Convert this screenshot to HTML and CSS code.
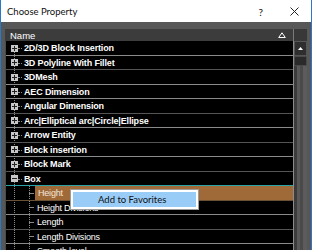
FILE: index.html
```html
<!DOCTYPE html>
<html>
<head>
<meta charset="utf-8">
<link rel="stylesheet" href="styles.css">
</head>
<body>
<div class="window">
  <div class="titlebar">
    <span class="title">Choose Property</span>
    <span class="help">?</span>
    <svg class="close" width="9" height="9" viewBox="0 0 9 9"><path d="M0.5 0.5 L8.5 8.5 M8.5 0.5 L0.5 8.5" stroke="#222" stroke-width="1" fill="none"/></svg>
  </div>
  <div class="frame">
    <div class="header">
      <div class="col-name">
        <span>Name</span>
        <svg class="sort" width="8" height="6" viewBox="0 0 8 6"><path d="M4 0.8 L7.3 5.5 L0.7 5.5 Z" stroke="#fff" stroke-width="1" fill="none"/></svg>
      </div>
      <div class="col-pad"></div>
    </div>
    <div class="body">
      <div class="tree">
        <div class="row r15"><span class="exp plus"></span><span class="label">2D/3D Block Insertion</span></div>
        <div class="row r14 dk"><span class="exp plus"></span><span class="label">3D Polyline With Fillet</span></div>
        <div class="row r15"><span class="exp plus"></span><span class="label">3DMesh</span></div>
        <div class="row r14"><span class="exp plus"></span><span class="label">AEC Dimension</span></div>
        <div class="row r15 dk"><span class="exp plus"></span><span class="label">Angular Dimension</span></div>
        <div class="row r14"><span class="exp plus"></span><span class="label">Arc|Elliptical arc|Circle|Ellipse</span></div>
        <div class="row r15 dk"><span class="exp plus"></span><span class="label">Arrow Entity</span></div>
        <div class="row r14"><span class="exp plus"></span><span class="label">Block insertion</span></div>
        <div class="row r15 dk"><span class="exp plus"></span><span class="label">Block Mark</span></div>
        <div class="row r14 sel-above"><span class="exp minus"></span><span class="label">Box</span></div>
        <div class="row r15 child selected"><span class="dash"></span><span class="label">Height</span></div>
        <div class="row r14 child"><span class="dash"></span><span class="label">Height Divisions</span></div>
        <div class="row r15 child dk"><span class="dash"></span><span class="label">Length</span></div>
        <div class="row r14 child"><span class="dash"></span><span class="label">Length Divisions</span></div>
        <div class="row r15 child"><span class="dash"></span><span class="label">Smooth level</span></div>
      </div>
      <div class="vscroll">
        <div class="btn-up"><svg width="5" height="3" viewBox="0 0 5 3"><path d="M2.5 0 L5 3 L0 3 Z" fill="#fff"/></svg></div>
        <div class="track-top"></div>
        <div class="thumb"></div>
      </div>
    </div>
  </div>
  <div class="menu"><span>Add to Favorites</span></div>
</div>
</body>
</html>
```

FILE: styles.css
```css
* { box-sizing: border-box; }
html, body {
  margin: 0;
  padding: 0;
  width: 312px;
  height: 250px;
  overflow: hidden;
  background: #555;
}
.window {
  position: relative;
  width: 312px;
  height: 250px;
  border-left: 1px solid #2b78c8;
  border-right: 1px solid #2b78c8;
  background: #575757;
  overflow: hidden;
  font-family: "Liberation Sans", Arial, sans-serif;
}
.titlebar {
  height: 22px;
  background: #fff;
  display: flex;
  align-items: center;
  padding: 0 0 0 6px;
  color: #111;
}
.title {
  font-family: "Lato", "Liberation Sans", sans-serif;
  font-size: 9.5px;
  flex: 1;
  margin-top: 1px;
}
.help {
  font-family: "Lato", "Liberation Sans", sans-serif;
  font-size: 10px;
  margin-right: 27px;
  margin-top: 1px;
}
.close {
  margin-right: 12px;
  margin-top: 1px;
}
.frame {
  padding: 7px 4px 0 4px;
}
.header {
  display: flex;
  height: 12px;
  background: #3c3c3c;
  color: #fff;
  font-size: 9.5px;
}
.col-name {
  width: 289px;
  display: flex;
  align-items: center;
  justify-content: space-between;
  padding: 0 7px 0 5px;
  border-right: 1px solid #7a7a7a;
}
.sort { margin-top: -1px; }
.col-pad {
  flex: 1;
  background: #383838;
}
.body {
  display: flex;
  height: 220px;
}
.tree {
  width: 289px;
  background-color: #000;
  border-right: 1px solid #8c8c8c;
  border-left: 1px solid #4a4a4a;
  background-image: repeating-linear-gradient(to bottom, #8a8a8a 0 1px, transparent 1px 2px);
  background-size: 1px 100%;
  background-position: 8px 7px;
  background-repeat: no-repeat;
}
.row {
  display: flex;
  align-items: center;
  color: #fff;
  font-size: 9px;
  font-weight: bold;
  letter-spacing: -0.15px;
  border-bottom: 1px solid #8a8a8a;
}
.row.dk { border-bottom-color: #555; }
.r15 { height: 15px; }
.r14 { height: 14px; }
.exp {
  width: 7px;
  height: 7px;
  margin-left: 5px;
  background: #c8c8c8;
  position: relative;
  flex: none;
}
.exp::before {
  content: "";
  position: absolute;
  left: 1px;
  top: 3px;
  width: 5px;
  height: 1px;
  background: #222;
}
.exp.plus::after {
  content: "";
  position: absolute;
  left: 3px;
  top: 1px;
  width: 1px;
  height: 5px;
  background: #222;
}
.label {
  padding-left: 6px;
  position: relative;
  white-space: nowrap;
}
.exp + .label::before {
  content: "";
  position: absolute;
  left: 0;
  top: 50%;
  width: 4px;
  border-top: 1px dotted #8a8a8a;
}
.child {
  font-weight: normal;
  letter-spacing: -0.2px;
  background-image: repeating-linear-gradient(to bottom, #8a8a8a 0 1px, transparent 1px 2px);
  background-size: 1px 100%;
  background-position: 23px 0;
  background-repeat: no-repeat;
}
.dash {
  width: 5px;
  margin-left: 23px;
  border-top: 1px solid #8a8a8a;
  flex: none;
}
.child .label { padding-left: 3px; align-self: stretch; display: flex; align-items: center; }
.row.sel-above { border-bottom: 1px solid #2aa3a6; }
.selected { border-bottom-color: #6a5036; }
.selected .label {
  flex: 1;
  background: #a06a38;
  color: #f2e6da;
  margin-left: 1px;
}
.vscroll {
  flex: 1;
  display: flex;
  flex-direction: column;
  background: #3a3a3a;
}
.btn-up {
  height: 15px;
  background: #2e2e2e;
  border: 1px solid #555;
  display: flex;
  align-items: center;
  justify-content: center;
}
.track-top {
  height: 10px;
  background: #2a2a2a;
  border: 1px solid #4a4a4a;
}
.thumb {
  flex: 1;
  background: linear-gradient(to right, #3c3c3c 0 3px, #595959 3px 6px, #4a4a4a 6px 9px, #5c5c5c 9px 12px);
}
.menu {
  position: absolute;
  left: 69px;
  top: 189px;
  width: 129px;
  height: 21px;
  background: #99ccf7;
  border: 1px solid #9c9c9c;
  box-shadow: inset 0 0 0 2px #fff;
  font-family: "Lato", "Liberation Sans", sans-serif;
  font-size: 9.5px;
  color: #111;
  display: flex;
  align-items: center;
  padding-left: 27px;
}
```
